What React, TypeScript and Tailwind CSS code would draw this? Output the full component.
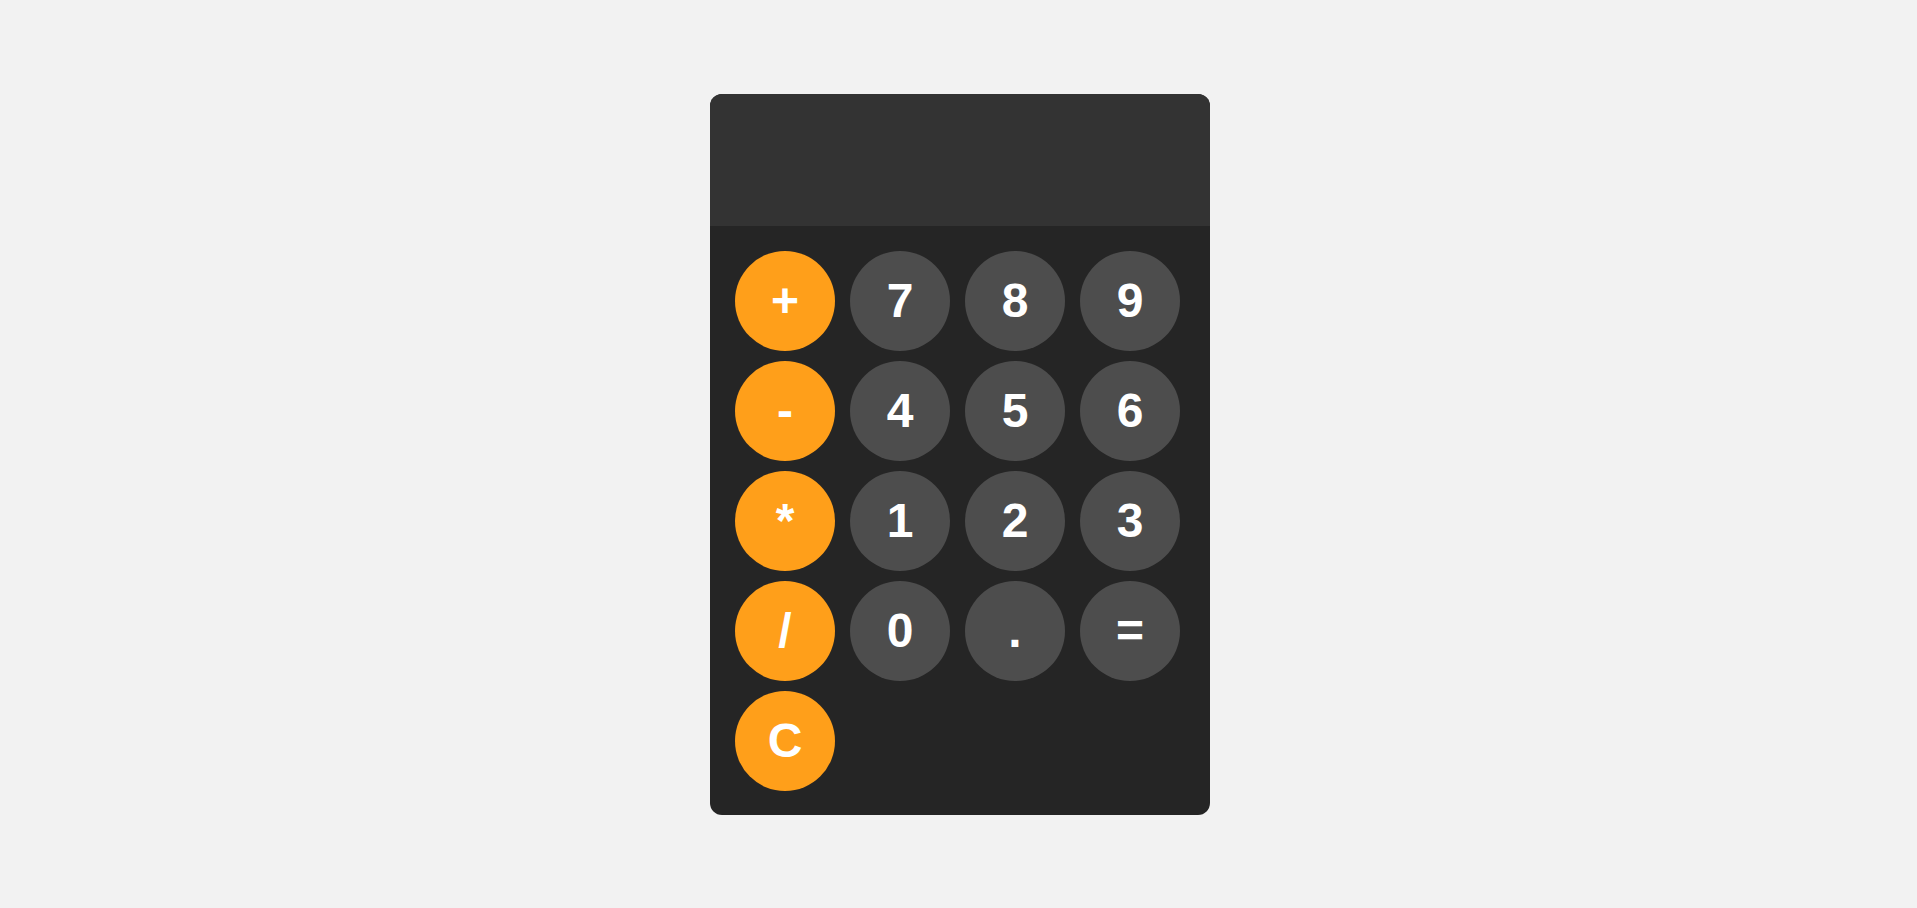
const keys: { label: string; op?: boolean }[][] = [
  [{ label: "+", op: true }, { label: "7" }, { label: "8" }, { label: "9" }],
  [{ label: "-", op: true }, { label: "4" }, { label: "5" }, { label: "6" }],
  [{ label: "*", op: true }, { label: "1" }, { label: "2" }, { label: "3" }],
  [{ label: "/", op: true }, { label: "0" }, { label: "." }, { label: "=" }],
  [{ label: "C", op: true }],
];

function Key({ label, op }: { label: string; op?: boolean }) {
  return (
    <button
      className={
        "flex h-[100px] w-[100px] items-center justify-center rounded-full font-['Liberation_Sans',Arial,Helvetica,sans-serif] text-[48px] font-bold text-white " +
        (op ? "bg-[#ff9f1a]" : "bg-[#4d4d4d]")
      }
    >
      {label}
    </button>
  );
}

export default function App() {
  return (
    <div className="flex min-h-screen items-center justify-center bg-[#f2f2f2] pl-[3px] font-['Liberation_Sans',Arial,Helvetica,sans-serif]">
      <div className="flex h-[721px] w-[500px] flex-col overflow-hidden rounded-[12px] bg-[#252525]">
        <div className="h-[132px] bg-[#333333]" />
        <div className="flex flex-col gap-[10px] pt-[25px] pl-[25px]">
          {keys.map((row, i) => (
            <div key={i} className="flex gap-[15px]">
              {row.map((k) => (
                <Key key={k.label} label={k.label} op={k.op} />
              ))}
            </div>
          ))}
        </div>
      </div>
    </div>
  );
}
